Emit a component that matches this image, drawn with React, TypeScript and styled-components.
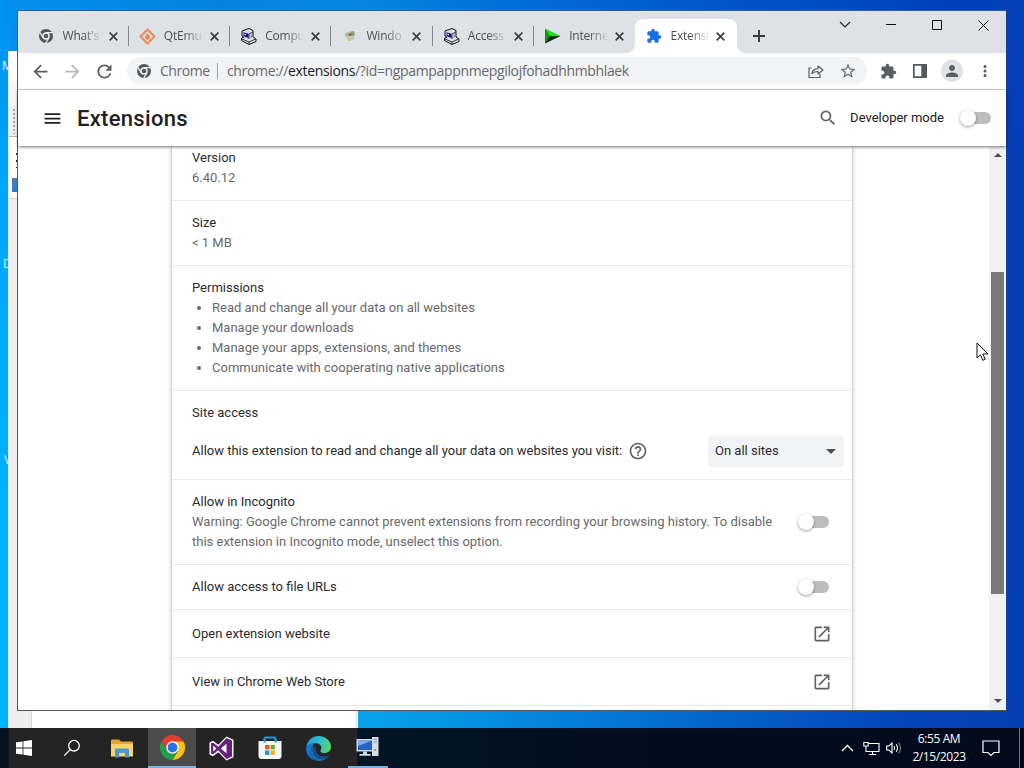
import React from 'react';
import styled, { createGlobalStyle } from 'styled-components';
import {
  MdArrowBack, MdArrowForward, MdRefresh, MdStarBorder, MdExtension, MdPerson, MdMoreVert,
  MdMenu, MdSearch, MdHelpOutline, MdOpenInNew,
} from 'react-icons/md';

const uiFont = '"Open Sans", "Noto Sans", sans-serif';

const GlobalStyle = createGlobalStyle`
  * { box-sizing: border-box; }
  body { margin: 0; overflow: hidden; font-family: Roboto, "Liberation Sans", sans-serif; }
  svg { display: block; flex: none; }
`;

const Desktop = styled.div`
  position: relative;
  width: 1024px;
  height: 768px;
  overflow: hidden;
  background:
    linear-gradient(180deg, #0090ee 0, #00a6fa 180px, #00b0fb 500px, #00b2f8 728px) 0 0 / 10px 728px no-repeat,
    linear-gradient(90deg, #08a4ee 358px, #0590e2 480px, #0364cb 720px, #0445bc 900px, #0440b4 1024px) 0 700px / 1024px 28px no-repeat,
    linear-gradient(180deg, #0440b8, #053fb4 400px, #0340b5) 1000px 0 / 24px 728px no-repeat,
    linear-gradient(90deg, #0490ee, #0283e0 220px, #0588e2 350px, #0270d8 500px, #0058cb 700px, #0040b8 960px);
`;

const DesktopLabel = styled.div<{ $x: number; $y: number }>`
  position: absolute;
  left: ${p => p.$x}px;
  top: ${p => p.$y}px;
  color: #e2f4ff;
  font: 12px/16px ${uiFont};
`;

const BackWindow = styled.div`
  position: absolute;
  left: 8px;
  top: 51px;
  width: 350px;
  height: 677px;
  display: flex;
  flex-direction: column;
  background: #eeeeef;
  border-left: 1px solid #dfe6ea;
`;
const BackTitle = styled.div`
  height: 55px;
  background: linear-gradient(#fff 30px, #f6f6f6 31px);
`;
const BackGrip = styled.div`
  height: 31px;
  padding: 2px 0 0 3px;
  border-bottom: 1px solid #b5b5b5;
  background: #f0f0f0;
  &::before {
    content: '';
    display: block;
    width: 4px;
    height: 26px;
    background: radial-gradient(circle, #a5a5a5 1px, transparent 1.3px) 0 0 / 4px 4px;
  }
`;
const BackTree = styled.div`
  height: 62px;
  padding: 16px 0 0 3px;
  background: #fff;
  border-bottom: 1px solid #d5d5d5;
`;
const TreeDots = styled.div`
  width: 2px;
  height: 15px;
  margin-left: 4px;
  background: repeating-linear-gradient(#222 0 2px, transparent 2px 7px);
`;
const TreeMark = styled.div`
  width: 7px;
  height: 14px;
  margin-top: 10px;
  background: linear-gradient(135deg, #5878a8, #2d86d6 50%, #4169a6);
`;
const BackPage = styled.div`
  flex: 1;
  margin: 500px 3px 0 22px;
  background: #fff;
  border-left: 1px solid #d5d5d5;
`;

const Browser = styled.div`
  position: absolute;
  left: 17px;
  top: 10px;
  width: 990px;
  height: 701px;
  display: flex;
  flex-direction: column;
  background: #fff;
  border: 1px solid #5b5556;
  border-top-color: #365f8c;
  border-right-color: #16439c;
`;

const TabStrip = styled.div`
  display: flex;
  height: 42px;
  padding: 8px 0 0 9.5px;
  background: #dee1e6;
`;
const Tab = styled.div<{ $active?: boolean; $bar?: boolean }>`
  position: relative;
  display: flex;
  align-items: center;
  flex: none;
  width: 101.33px;
  height: 34px;
  padding-left: 10px;
  border-radius: 8px 8px 0 0;
  background: ${p => (p.$active ? '#fff' : 'transparent')};
  &::after {
    content: '';
    display: ${p => (p.$bar ? 'block' : 'none')};
    position: absolute;
    right: 0;
    top: 7px;
    width: 1px;
    height: 20px;
    background: #84878c;
  }
`;
const TabFoot = styled.i<{ $side: 'left' | 'right' }>`
  position: absolute;
  bottom: 0;
  ${p => p.$side}: -8px;
  width: 8px;
  height: 8px;
  background: radial-gradient(circle at ${p => (p.$side === 'left' ? '0' : '100%')} 0, transparent 7.5px, #fff 8px);
`;
const TabIcon = styled.span`
  display: grid;
  place-items: center;
  width: 17px;
`;
const TabText = styled.span`
  width: 38px;
  margin-left: 8px;
  overflow: hidden;
  white-space: nowrap;
  font: 12px/18px ${uiFont};
  letter-spacing: -0.2px;
  color: #4c4f54;
  mask-image: linear-gradient(90deg, #000 20px, rgba(0, 0, 0, 0.15) 37px);
`;
const TabClose = styled.span`
  display: grid;
  margin-left: 8px;
`;
const NewTab = styled.div`
  display: grid;
  place-items: center;
  width: 45px;
  height: 34px;
`;
const WindowButtons = styled.div`
  display: flex;
  margin: -8px 0 0 auto;
  height: 28px;
`;
const WindowButton = styled.div`
  display: grid;
  place-items: center;
  width: 46px;
  height: 28px;
`;

const Toolbar = styled.div`
  display: flex;
  align-items: center;
  height: 37px;
  padding: 0 10px 0 11px;
  border-bottom: 1px solid #d9dadc;
  color: #5b5e62;
  background: #fff;
`;
const ToolButton = styled.div<{ $w: number; $dim?: boolean }>`
  display: grid;
  place-items: center;
  flex: none;
  width: ${p => p.$w}px;
  color: ${p => (p.$dim ? '#b7b9bc' : 'inherit')};
`;
const AddressBar = styled.div`
  display: flex;
  align-items: center;
  flex: none;
  width: 740px;
  height: 28px;
  margin-left: 12px;
  padding: 0 3px 0 10px;
  border-radius: 14px;
  background: #f2f3f5;
  font: 14px/20px ${uiFont};
  color: #66696e;
`;
const Scheme = styled.span`
  width: 58px;
  margin-left: 9px;
  padding-right: 8px;
  border-right: 1px solid #9c9fa3;
  line-height: 16px;
  white-space: nowrap;
  letter-spacing: -0.45px;
`;
const Url = styled.span`
  flex: 1;
  margin-left: 9px;
  white-space: nowrap;
  letter-spacing: -0.35px;
  b { font-weight: 400; color: #202124; }
`;
const Avatar = styled.div`
  display: grid;
  place-items: center;
  width: 22px;
  height: 22px;
  border-radius: 50%;
  background: #dee1e6;
`;

const PageHeader = styled.header`
  position: relative;
  z-index: 1;
  display: flex;
  align-items: center;
  height: 56px;
  padding: 0 14px 0 23.5px;
  color: #202124;
  background: #fff;
  box-shadow: 0 1px 3px rgba(0, 0, 0, 0.55);
`;
const PageTitle = styled.h1`
  flex: 1;
  margin: 0 0 0 14.5px;
  font-size: 22px;
  font-weight: 500;
  letter-spacing: 0.3px;
`;
const DevMode = styled.span`
  margin: 0 16px 1px 12px;
  font: 13px/20px Roboto, sans-serif;
`;

const Toggle = styled.span`
  display: flex;
  align-items: center;
  flex: none;
  width: 28px;
  height: 12px;
  margin: 0 1px 0 3px;
  border-radius: 6px;
  background: #bdbdbd;
  &::before {
    content: '';
    width: 16px;
    height: 16px;
    margin-left: -3px;
    border-radius: 50%;
    background: #fff;
    box-shadow: 0 1px 3px rgba(0, 0, 0, 0.4);
  }
`;

const Content = styled.div`
  display: flex;
  flex: 1;
  min-height: 0;
`;
const Scroller = styled.main`
  flex: 1;
  padding: 0 137px 0 154px;
  overflow: hidden;
`;
const Card = styled.div`
  height: 620px;
  background: #fff;
  box-shadow: 0 1px 2px rgba(60, 64, 67, 0.4), 0 1px 4px 1px rgba(60, 64, 67, 0.18);
  font-size: 13px;
  line-height: 20px;
  color: #2a2b2e;
`;
const Section = styled.section<{ $h: number; $top?: number }>`
  height: ${p => p.$h}px;
  padding: ${p => p.$top ?? 12}px 20px 0;
  border-bottom: 1px solid #e8e9eb;
`;
const LinkRow = styled.div<{ $h: number; $right?: number }>`
  display: flex;
  align-items: center;
  justify-content: space-between;
  height: ${p => p.$h}px;
  padding: 0 ${p => p.$right ?? 20}px 0 20px;
  border-bottom: 1px solid #e8e9eb;
  svg { color: #5f6368; }
`;
const Label = styled.div``;
const Muted = styled.div`
  color: #68696c;
`;
const PermissionList = styled.ul`
  margin: 0;
  padding-left: 20px;
  color: #68696c;
`;
const AccessRow = styled.div`
  display: flex;
  align-items: center;
  height: 32px;
  margin: 12px -12px 0 0;
  svg { color: #5f6368; }
`;
const Select = styled.div`
  display: flex;
  align-items: center;
  justify-content: space-between;
  width: 136px;
  height: 32px;
  margin-left: auto;
  padding: 0 8px 0 7px;
  border-radius: 4px;
  background: #f1f3f4;
`;
const HelpSlot = styled.span`
  margin-left: 6px;
`;

const ScrollTrack = styled.div`
  display: flex;
  flex-direction: column;
  align-items: center;
  width: 17px;
  padding: 7px 0;
  background: #f1f1f1;
`;
const ScrollThumb = styled.div`
  width: 13px;
  height: 322px;
  margin: 115px 0 auto;
  background: #787b7a;
`;
const Arrow = styled.i<{ $up?: boolean; $size?: number }>`
  border: ${p => p.$size ?? 4}px solid transparent;
  border-${p => (p.$up ? 'bottom' : 'top')}-color: #505050;
  border-${p => (p.$up ? 'top' : 'bottom')}-width: 0;
`;

const Taskbar = styled.div`
  position: absolute;
  left: 0;
  top: 728px;
  width: 1024px;
  height: 40px;
  display: flex;
  color: #fff;
  background: linear-gradient(90deg, #02131f 0 8px, #242424 9px 357px, #021526 358px, #020d20 600px, #020a1b 1024px);
`;
const Task = styled.div<{ $w: number; $active?: boolean }>`
  display: grid;
  place-items: center;
  width: ${p => p.$w}px;
  height: 40px;
  background: ${p => (p.$active ? '#4b4b4b' : 'transparent')};
`;
const RunningTask = styled(Task)`
  border-bottom: 2px solid #76b0e8;
`;
const Tray = styled.div`
  display: flex;
  align-items: center;
  margin-left: auto;
`;
const Clock = styled.div`
  width: 62px;
  margin: 0 12px 0 3px;
  text-align: center;
  white-space: nowrap;
  font: 12px/18px ${uiFont};
  letter-spacing: -0.4px;
`;
const ShowDesktop = styled.div`
  width: 5px;
  height: 40px;
  margin-left: 19px;
  border-left: 1px solid #6d7580;
`;
const Pointer = styled.svg`
  position: absolute;
  left: 976px;
  top: 342px;
`;

const ChromeGray = ({ size = 14 }: { size?: number }) => (
  <svg width={size} height={size} viewBox="0 0 24 24">
    <circle cx="12" cy="12" r="12" fill="#54575b" />
    <circle cx="12" cy="12" r="6.4" fill="#f1f2f4" />
    <circle cx="12" cy="12" r="4" fill="#54575b" />
    <path d="M12 6.3h10.800M7 15 1.600 5.800M17 15l-5.400 9" stroke="#f1f2f4" strokeWidth="2" />
  </svg>
);

const CloseGlyph = () => (
  <svg width="9" height="9" viewBox="0 0 9 9">
    <path d="m.7.7 7.600 7.600m0-7.600L.7 8.300" stroke="#3f4247" strokeWidth="1.800" />
  </svg>
);

const PlusGlyph = () => (
  <svg width="12" height="12" viewBox="0 0 12 12">
    <path d="M6 0v12M0 6h12" stroke="#35383c" strokeWidth="1.900" />
  </svg>
);

const OrangeDiamond = () => (
  <svg width="17" height="17" viewBox="0 0 17 17">
    <path d="m8.500 1.500 7 7-7 7-7-7z" fill="none" stroke="#f08a4b" strokeWidth="1.900" strokeLinejoin="round" />
    <path d="M8.700 4.500c.2 2 2.300 2.800 2.300 4.800a2.500 2.500 0 0 1-5 0c0-1.600 1.500-2 2.700-4.800z" fill="#f08a4b" />
  </svg>
);

const OldComputer = () => (
  <svg width="17" height="17" viewBox="0 0 17 17">
    <path d="m2 3 7-2.500 4 2v6.500l3 2v2.500l-7 3-7.500-4v-2.300L4 9.500 2 8z" fill="#dedee6" stroke="#111" />
    <path d="m3.500 4.300 5 1.500v4.200l-5-1.800z" fill="#10108c" />
    <path d="m4.500 5.500 1.500.5v1.500l-1.500-.5z" fill="#fff" />
    <path d="M9 6v5M9 6l4-2M2 11l7 3 6.500-3M9 14v2" fill="none" stroke="#222" strokeWidth=".9" />
    <path d="m10.500 7 1.500-.8v3l-1.500.7z" fill="#8b8b99" />
  </svg>
);

const PaleLogo = () => (
  <svg width="14" height="14" viewBox="0 0 16 16">
    <path d="m2.500 5 5-2.500 1 5.500-4 1.500L2 8z" fill="#b9b8a2" />
    <path d="m8 3 4.500-.8 1.200 5-4.200 1.300z" fill="#9d9b7e" />
    <path d="m4 10 3.500-1.500L10 13l-4 1z" fill="#cfc480" />
    <path d="m8.500 9 4.500-1-.5 4-2.500 1z" fill="#c0c1b8" />
    <path d="m5 6 5-1.500-1 4z" fill="#6f6d4e" />
  </svg>
);

const GreenArrow = () => (
  <svg width="17" height="16" viewBox="0 0 17 16">
    <path d="M1 .5 16.500 8 1 8z" fill="#1be01b" />
    <path d="M1 15.500V8h15.500z" fill="#032a03" />
    <path d="m1 .5 5 7.500-5 7.500z" fill="#0a9a12" />
  </svg>
);

const ShareIcon = () => (
  <svg width="16" height="16" viewBox="0 0 16 16" fill="none" stroke="#5b5e62" strokeWidth="1.200">
    <path d="M3.500 5H1v9.500h11V11" />
    <path d="M4 10.500c.3-3 2.500-4.800 6-4.900V3l5 4-5 4V8.500c-2.800 0-4.500.4-6 2z" strokeLinejoin="round" />
  </svg>
);

const SidePanelIcon = () => (
  <svg width="14" height="14" viewBox="0 0 14 14">
    <path d="M0 0h14v14H0zM1.700 1.700v10.600h6.600V1.700z" fill="#55585c" fillRule="evenodd" />
  </svg>
);

const WindowsLogo = () => (
  <svg width="16" height="16" viewBox="0 0 16 16" fill="#fff">
    <path d="M0 2.300 6.600 1.400v6.200H0zM7.400 1.300 16 0v7.600H7.400zM0 8.400h6.600v6.200L0 13.700zM7.400 8.400H16V16l-8.600-1.300z" />
  </svg>
);

const TaskSearch = () => (
  <svg width="18" height="18" viewBox="0 0 18 18" fill="none" stroke="#fff" strokeWidth="1.300">
    <circle cx="11" cy="6.700" r="5.300" />
    <path d="m7.200 10.600-6 6" />
  </svg>
);

const Folder = () => (
  <svg width="22" height="19" viewBox="0 0 22 19">
    <path d="M0 1.500Q0 .5 1 .5h7l2 2h11q1 0 1 1V7H0z" fill="#e3a52e" />
    <path d="M0 5h22v12.500H0z" fill="#fbd46c" />
    <path d="M4 18.500V10.500q0-1 1-1h12q1 0 1 1v8h-4V14H8v4.500z" fill="#4a9ad6" />
  </svg>
);

const ChromeColor = () => (
  <svg width="25" height="25" viewBox="0 0 48 48">
    <path d="M24 12h20.800A24 24 0 0 1 24 48l11-18z" fill="#fbc116" />
    <path d="M24 12h20.800A24 24 0 0 0 3.200 12l10.400 18z" fill="#e33b2e" />
    <path d="m3.200 12 10.400 18L24 36l10.400-6L24 48A24 24 0 0 1 3.200 12z" fill="#229f4b" />
    <circle cx="24" cy="24" r="12" fill="#fff" />
    <circle cx="24" cy="24" r="9.400" fill="#2473e8" />
  </svg>
);

const VisualStudio = () => (
  <svg width="25" height="25" viewBox="0 0 25 25">
    <path d="m17.500.5 7 3.200v17.600l-7 3.200-8.200-8.200L4 20.200l-3.500-1.600V6.400L4 4.800l5.300 3.900z" fill="#fff" />
    <path d="m17.500 2 5.500 2.600v15.800L17.500 23l-8.300-8.700L4 18.600l-2-1V7.400l2-1 5.200 4.300zM17.500 7.800l-5.700 4.700 5.700 4.700zM4.300 9.500v6l3-3z" fill="#68217a" fillRule="evenodd" />
  </svg>
);

const Store = () => (
  <svg width="24" height="24" viewBox="0 0 24 24">
    <path d="M6.500 6V2.500q0-1 1-1h9q1 0 1 1V6" fill="none" stroke="#2396dc" strokeWidth="2" />
    <path d="M.5 5h23v15q0 3-3 3h-17q-3 0-3-3z" fill="#f5f6f8" />
    <path d="M7 9h4.400v4.400H7z" fill="#e8532b" /><path d="M12.500 9h4.400v4.400h-4.400z" fill="#75ad28" />
    <path d="M7 14.500h4.400v4.400H7z" fill="#1d99dd" /><path d="M12.500 14.500h4.400v4.400h-4.400z" fill="#efb21b" />
    <path d="M6.500 6.500V3M17.500 6.500V3" stroke="#2396dc" strokeWidth="2" />
  </svg>
);

const Edge = () => (
  <svg width="25" height="25" viewBox="0 0 24 24">
    <defs>
      <linearGradient id="edgeTop" x1="0" y1=".4" x2="1" y2=".6">
        <stop offset="0" stopColor="#1b9fe0" /><stop offset=".5" stopColor="#2cc0d0" /><stop offset="1" stopColor="#5cd65b" />
      </linearGradient>
      <linearGradient id="edgeLow" x1="0" y1="0" x2=".6" y2="1">
        <stop offset="0" stopColor="#1684d8" /><stop offset="1" stopColor="#1060ae" />
      </linearGradient>
    </defs>
    <path d="M.3 10.500C1.200 4.300 6 0 12 0c7 0 12 5 12 10.500 0 3.500-2.800 5.800-6 5.800-2.600 0-4.200-1-4.200-2 0-.7 1-1.300 1-3 0-2.300-2.400-4.300-5.800-4.300C5 7 1.800 8.500.3 10.500z" fill="url(#edgeTop)" />
    <path d="M.2 11C1.500 8.500 5 7 8.500 7.200c-2.300 1.200-3.500 3.500-3.500 6.800 0 4.500 3 8.300 7 10C5 24-.5 18.500.2 11z" fill="url(#edgeLow)" />
    <path d="M9 8.500c-2 1.500-2.800 3.500-2.500 6 .5 4.500 4 7.500 8 7.500 3.300 0 6-1.300 7.800-3.500C20 22 16.500 24 12 24c-4-1.500-7-5.500-7-10 0-3 1.500-5 4-5.500z" fill="#1475c4" />
    <path d="M9.500 10c-1.700 5 2.500 10 8.500 9.500 1.700-.1 3-.6 4.500-1.500-2 3-5 4.500-8 4.200-5-.5-8.500-4.500-8-8.500.2-1.800 1.300-3.200 3-3.700z" fill="#194c8e" />
  </svg>
);

const RemotePc = () => (
  <svg width="24" height="22" viewBox="0 0 24 22">
    <path d="M16 1h6.500v19H16z" fill="#d8dde2" />
    <path d="M17.500 3.500H21M17.500 6H21" stroke="#8b96a3" />
    <circle cx="19.300" cy="14" r="1" fill="#64af60" />
    <path d="M.5 3h17v12.500H.5z" fill="#cfd9e5" />
    <path d="M2 4.500h14V14H2z" fill="#2465c4" />
    <path d="M2 4.500h14L2 10z" fill="#76aef0" />
    <path d="M7 15.500h4V18h3.500v1.800H3.500V18H7z" fill="#d6dbe1" />
  </svg>
);

const tabs: { text: string; icon: React.ReactNode }[] = [
  { text: "What's", icon: <ChromeGray /> },
  { text: 'QtEmu ', icon: <OrangeDiamond /> },
  { text: 'Compu', icon: <OldComputer /> },
  { text: 'Windo', icon: <PaleLogo /> },
  { text: 'Access', icon: <OldComputer /> },
  { text: 'Interne', icon: <GreenArrow /> },
  { text: 'Extensi', icon: <MdExtension size={16} color="#1a6fe0" /> },
];

const permissions = [
  'Read and change all your data on all websites',
  'Manage your downloads',
  'Manage your apps, extensions, and themes',
  'Communicate with cooperating native applications',
];

export default function App() {
  return (
    <Desktop>
      <GlobalStyle />
      <DesktopLabel $x={2} $y={58}>M</DesktopLabel>
      <DesktopLabel $x={3} $y={256}>D</DesktopLabel>
      <DesktopLabel $x={4} $y={452}>V</DesktopLabel>

      <BackWindow>
        <BackTitle />
        <BackGrip />
        <BackTree><TreeDots /><TreeMark /></BackTree>
        <BackPage />
      </BackWindow>

      <Browser>
        <TabStrip>
          {tabs.map((tab, i) => {
            const active = i === tabs.length - 1;
            return (
              <Tab key={tab.text} $active={active} $bar={i < tabs.length - 2}>
                {active && <><TabFoot $side="left" /><TabFoot $side="right" /></>}
                <TabIcon>{tab.icon}</TabIcon>
                <TabText>{tab.text}</TabText>
                <TabClose><CloseGlyph /></TabClose>
              </Tab>
            );
          })}
          <NewTab><PlusGlyph /></NewTab>
          <WindowButtons>
            <WindowButton>
              <svg width="12" height="8" viewBox="0 0 12 8"><path d="m1 1 5 5 5-5" fill="none" stroke="#222" strokeWidth="1.100" /></svg>
            </WindowButton>
            <WindowButton>
              <svg width="10" height="2" viewBox="0 0 10 2"><path d="M0 .5h10" stroke="#111" /></svg>
            </WindowButton>
            <WindowButton>
              <svg width="10" height="10" viewBox="0 0 10 10"><path d="M.5.5h9v9h-9z" fill="none" stroke="#111" /></svg>
            </WindowButton>
            <WindowButton>
              <svg width="11" height="11" viewBox="0 0 11 11"><path d="m.5.5 10 10m0-10-10 10" stroke="#111" /></svg>
            </WindowButton>
          </WindowButtons>
        </TabStrip>

        <Toolbar>
          <ToolButton $w={22}><MdArrowBack size={21} /></ToolButton>
          <ToolButton $w={42} $dim><MdArrowForward size={21} /></ToolButton>
          <ToolButton $w={22}><MdRefresh size={21} /></ToolButton>
          <AddressBar>
            <ChromeGray />
            <Scheme>Chrome</Scheme>
            <Url>chrome://<b>extensions</b>/?id=ngpampappnmepgilojfohadhhmbhlaek</Url>
            <ToolButton $w={32}><ShareIcon /></ToolButton>
            <ToolButton $w={32}><MdStarBorder size={18} /></ToolButton>
          </AddressBar>
          <ToolButton $w={42}><MdExtension size={17} /></ToolButton>
          <ToolButton $w={22}><SidePanelIcon /></ToolButton>
          <ToolButton $w={42}><Avatar><MdPerson size={18} /></Avatar></ToolButton>
          <ToolButton $w={23}><MdMoreVert size={18} /></ToolButton>
        </Toolbar>

        <PageHeader>
          <MdMenu size={21} />
          <PageTitle>Extensions</PageTitle>
          <MdSearch size={20} color="#5f6368" />
          <DevMode>Developer mode</DevMode>
          <Toggle />
        </PageHeader>

        <Content>
          <Scroller>
            <Card>
              <Section $h={55} $top={2}><Label>Version</Label><Muted>6.40.12</Muted></Section>
              <Section $h={65}><Label>Size</Label><Muted>&lt; 1 MB</Muted></Section>
              <Section $h={125}>
                <Label>Permissions</Label>
                <PermissionList>{permissions.map(p => <li key={p}>{p}</li>)}</PermissionList>
              </Section>
              <Section $h={89}>
                <Label>Site access</Label>
                <AccessRow>
                  <Label>Allow this extension to read and change all your data on websites you visit:</Label>
                  <HelpSlot><MdHelpOutline size={20} /></HelpSlot>
                  <Select>On all sites<Arrow $size={5} /></Select>
                </AccessRow>
              </Section>
              <LinkRow $h={85} $right={22}>
                <div>
                  <Label>Allow in Incognito</Label>
                  <Muted>
                    Warning: Google Chrome cannot prevent extensions from recording your browsing history. To disable
                    <br />this extension in Incognito mode, unselect this option.
                  </Muted>
                </div>
                <Toggle />
              </LinkRow>
              <LinkRow $h={45} $right={22}><Label>Allow access to file URLs</Label><Toggle /></LinkRow>
              <LinkRow $h={48}><Label>Open extension website</Label><MdOpenInNew size={20} /></LinkRow>
              <LinkRow $h={48}><Label>View in Chrome Web Store</Label><MdOpenInNew size={20} /></LinkRow>
            </Card>
          </Scroller>
          <ScrollTrack>
            <Arrow $up />
            <ScrollThumb />
            <Arrow />
          </ScrollTrack>
        </Content>
      </Browser>

      <Taskbar>
        <Task $w={48}><WindowsLogo /></Task>
        <Task $w={48}><TaskSearch /></Task>
        <Task $w={52}><Folder /></Task>
        <RunningTask $w={48} $active><ChromeColor /></RunningTask>
        <Task $w={50}><VisualStudio /></Task>
        <Task $w={47}><Store /></Task>
        <Task $w={50}><Edge /></Task>
        <Task $w={5} />
        <RunningTask $w={40}><RemotePc /></RunningTask>
        <Tray>
          <Task $w={24}>
            <svg width="13" height="8" viewBox="0 0 13 8"><path d="m1 7 5.500-5.500L12 7" fill="none" stroke="#fff" strokeWidth="1.300" /></svg>
          </Task>
          <Task $w={24}>
            <svg width="17" height="15" viewBox="0 0 17 15" fill="none" stroke="#fff" strokeWidth="1.100">
              <path d="M5.500 2.500h10.500v8H3V6.500M9.500 10.500v3M6 13.500h7M.8 1.500h4.400v3.500H.8zM3 5v2" />
            </svg>
          </Task>
          <Task $w={22}>
            <svg width="16" height="14" viewBox="0 0 16 14" fill="none" stroke="#fff" strokeWidth="1.100">
              <path d="M.7 5h2.300l3-3v10l-3-3H.7zM8 5q1.300 2 0 4M10.200 3.300q2.600 3.700 0 7.400" />
              <path d="M12.500 1.500q4 5.500 0 11" stroke="#777d88" />
            </svg>
          </Task>
          <Clock>6:55 AM<br />2/15/2023</Clock>
          <svg width="18" height="17" viewBox="0 0 18 17"><path d="M1 1h16v11.500h-5L9 15.500l-3-3H1z" fill="none" stroke="#fff" strokeWidth="1.200" /></svg>
          <ShowDesktop />
        </Tray>
      </Taskbar>

      <Pointer width="13" height="20" viewBox="0 0 13 20">
        <path d="M1 1v15l3.500-3.200 2.300 5.500 2.400-1-2.300-5.300H12z" fill="#fff" stroke="#111" />
      </Pointer>
    </Desktop>
  );
}
